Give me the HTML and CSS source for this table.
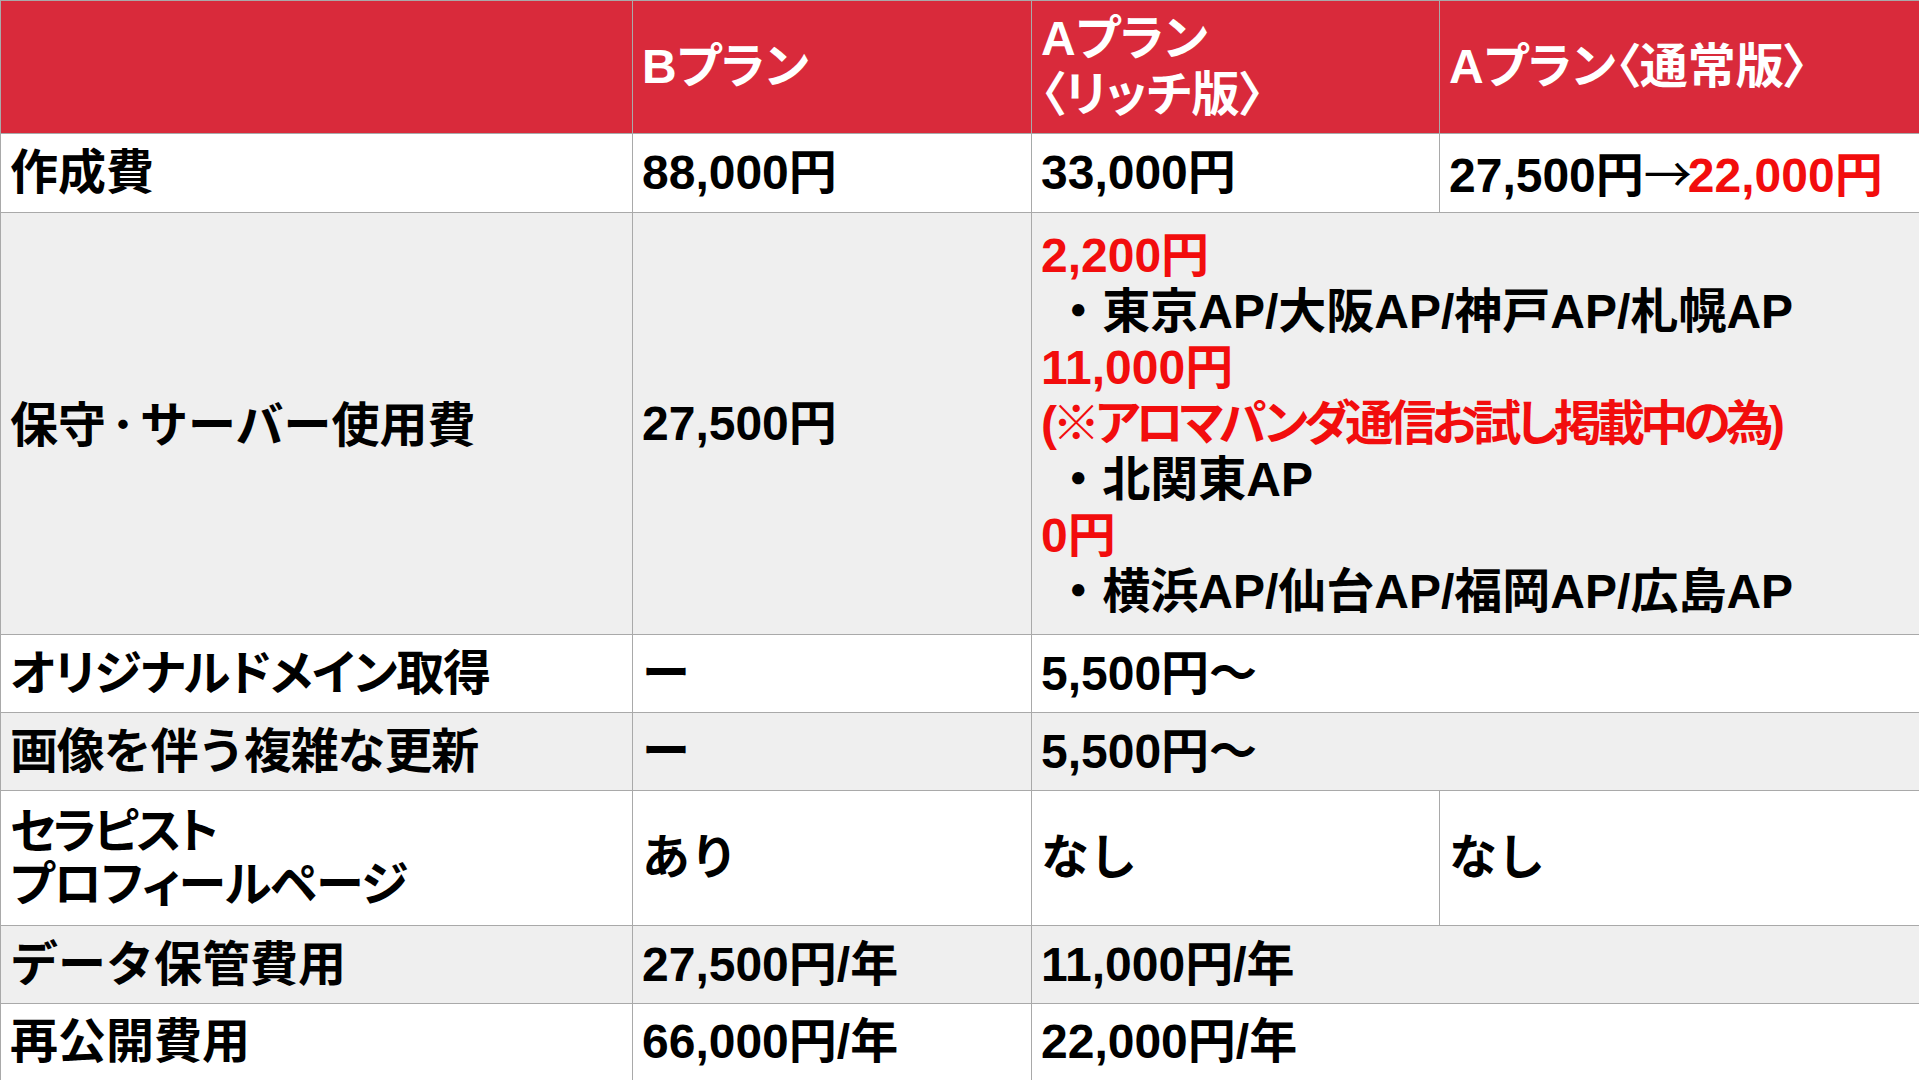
FILE: index.html
```html
<!DOCTYPE html>
<html lang="ja">
<head>
<meta charset="utf-8">
<title>料金比較</title>
<link rel="stylesheet" href="styles.css">
</head>
<body>
<div class="table">
  <div class="cell head"></div>
  <div class="cell head">Bプラン</div>
  <div class="cell head lines"><span>Aプラン</span><span>〈リッチ版〉</span></div>
  <div class="cell head">Aプラン〈通常版〉</div>

  <div class="cell">作成費</div>
  <div class="cell">88,000円</div>
  <div class="cell">33,000円</div>
  <div class="cell"><span>27,500円<span class="arrow">→</span><span class="red">22,000円</span></span></div>

  <div class="cell alt"><span>保守<span class="dot">･</span>サーバー使用費</span></div>
  <div class="cell alt">27,500円</div>
  <div class="cell alt span2 lines">
    <span class="red">2,200円</span>
    <span>&nbsp;・東京AP/大阪AP/神戸AP/札幌AP</span>
    <span class="red">11,000円</span>
    <span class="red prop note">(※アロマパンダ通信お試し掲載中の為)</span>
    <span>&nbsp;・北関東AP</span>
    <span class="red">0円</span>
    <span>&nbsp;・横浜AP/仙台AP/福岡AP/広島AP</span>
  </div>

  <div class="cell prop narrow">オリジナルドメイン取得</div>
  <div class="cell">ー</div>
  <div class="cell span2">5,500円～</div>

  <div class="cell alt narrow">画像を伴う複雑な更新</div>
  <div class="cell alt">ー</div>
  <div class="cell alt span2">5,500円～</div>

  <div class="cell lines tight prop"><span class="kana1">セラピスト</span><span class="kana2">プロフィールページ</span></div>
  <div class="cell">あり</div>
  <div class="cell">なし</div>
  <div class="cell">なし</div>

  <div class="cell alt">データ保管費用</div>
  <div class="cell alt">27,500円/年</div>
  <div class="cell alt span2">11,000円/年</div>

  <div class="cell">再公開費用</div>
  <div class="cell">66,000円/年</div>
  <div class="cell span2">22,000円/年</div>
</div>
</body>
</html>
```
FILE: styles.css
```css
html, body {
  margin: 0;
  padding: 0;
  background: #ffffff;
}

body {
  width: 1919px;
  height: 1080px;
  overflow: hidden;
  font-family: "Liberation Sans", "Noto Sans CJK JP", sans-serif;
  font-weight: 700;
  font-size: 48px;
  color: #000000;
}

.table {
  display: grid;
  grid-template-columns: 631px 398px 407px 1fr;
  grid-template-rows: 132px 78px 421px 77px 77px 134px 77px 76px;
  gap: 1px;
  padding: 1px 0 0 1px;
  background: #a9a9a9;
  width: 1919px;
  height: 1080px;
  box-sizing: border-box;
}

.cell {
  background: #ffffff;
  display: flex;
  align-items: center;
  padding-left: 9px;
  line-height: 56px;
  white-space: nowrap;
  overflow: hidden;
}

.cell.lines {
  flex-direction: column;
  justify-content: center;
  align-items: flex-start;
}

.cell.alt {
  background: #efefef;
}

.cell.head {
  background: #d92a3b;
  color: #ffffff;
  font-feature-settings: "palt";
}

.cell.span2 {
  grid-column: span 2;
}

.lines span {
  display: block;
}

.cell.tight {
  line-height: 53px;
}

.prop {
  font-feature-settings: "palt";
}

.narrow {
  letter-spacing: -1.2px;
}

.kana1 {
  letter-spacing: -3px;
}

.kana2 {
  letter-spacing: -1px;
}

.dot {
  font-family: "Noto Sans CJK JP", sans-serif;
  padding: 0 5px;
}

.arrow {
  font-family: "Noto Sans CJK JP", sans-serif;
  font-weight: 400;
  letter-spacing: -4px;
}

.red {
  color: #f20d0d;
}

.note {
  letter-spacing: -4.8px;
}
```
